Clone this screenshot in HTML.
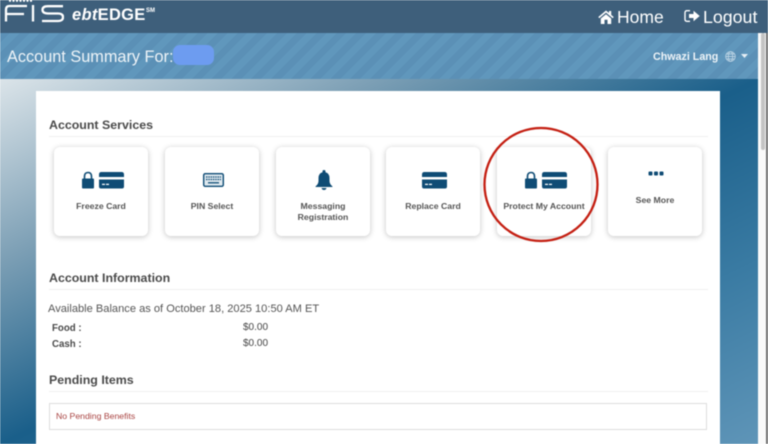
<!DOCTYPE html>
<html><head><meta charset="utf-8"><style>
html,body{margin:0;padding:0}
body{width:768px;height:444px;overflow:hidden;position:relative;font-family:"Liberation Sans",sans-serif;background:#fff}
#w{left:0;top:0;width:768px;height:444px;overflow:hidden;filter:blur(.4px)}
div,span,svg{position:absolute}
span{white-space:nowrap}
.h{left:49px;font-size:12.4px;font-weight:bold;color:#4a4a4a;line-height:16px}
.hr{left:49px;width:659px;height:1px;background:#f0f0f0}
.c{top:147px;width:94px;height:89px;background:#fff;border-radius:6px;box-shadow:0 1px 6px rgba(0,0,0,.24)}
.t{width:100%;text-align:center;left:0;font-size:8.7px;font-weight:bold;color:#555;line-height:10.5px}
.b{font-size:9.7px;font-weight:bold;color:#4a4a4a;line-height:12px}
.v{font-size:10px;color:#444;line-height:12px;left:243px}
</style></head><body><div id="w">
<div style="left:0;top:79px;width:758px;height:365px;background:linear-gradient(to bottom right,#dbe4e9 0%,#7c9fb5 25%,#1a5f8a 50%,#3a7ba3 75%,#5f95b8 100%)"></div>
<div style="left:0;top:0;width:768px;height:33px;background:#3e5f7b"></div>
<div style="left:0;top:33px;width:758px;height:46px;background:repeating-linear-gradient(135deg,#5b90b6 0,#5b90b6 7px,#6097bc 7px,#6097bc 14px)"></div>
<div style="left:758px;top:33px;width:8px;height:411px;background:#fafafa"></div>
<div style="left:761px;top:33px;width:4px;height:117px;background:#c4c4c4;border-radius:2px"></div>
<div style="left:766px;top:33px;width:2px;height:411px;background:#6e6e6e"></div>

<svg style="left:4px;top:0" width="60" height="24" viewBox="0 0 60 24"><g fill="none" stroke="#fff" stroke-width="2.300"><path d="M2 21.500V9.500Q2 6 5.500 6H23"/><path d="M2 14H20"/><path d="M29 5V21.500"/><path d="M59 6.200H44Q38.500 6.200 38.500 9.800T44 13.500H54Q59 13.500 59 17.200T54 21H38"/></g><path stroke="#fff" stroke-width="2" stroke-dasharray="2 1.500" d="M5 .8H29"/></svg>
<span style="left:72px;top:5px;font-size:16.500px;line-height:21px;font-weight:bold;color:#fff;letter-spacing:.3px"><i>ebt</i>EDGE</span>
<span style="left:146px;top:8px;font-size:6px;line-height:7px;font-weight:bold;color:#fff">SM</span>

<svg style="left:598px;top:10px" width="16" height="14" viewBox="0 0 16 14"><path fill="#fff" d="M8 0.500L0.300 7 1.300 8.200 8 2.600 14.700 8.200 15.700 7 13.200 4.900V1H11V3L8 .5ZM2.800 8.500V14H6.500V9.800H9.500V14H13.200V8.500L8 4.200Z"/></svg>
<span style="left:617px;top:7px;font-size:17.500px;line-height:21px;color:#fff">Home</span>
<svg style="left:684px;top:9px" width="17" height="15" viewBox="0 0 17 15"><path fill="none" stroke="#fff" stroke-width="1.400" d="M6 1.700H3Q1 1.700 1 3.700V10.300Q1 12.300 3 12.300H6"/><path fill="#fff" d="M5 5H9.500V1.800L15.700 7 9.500 12.200V9H5Z"/></svg>
<span style="left:703px;top:7px;font-size:17.800px;line-height:21px;color:#fff">Logout</span>

<span style="left:7px;top:47px;font-size:16.300px;line-height:20px;color:#eef4f8">Account Summary For:</span>
<div style="left:173px;top:45px;width:41px;height:20px;background:#6d9cf0;border-radius:7px"></div>
<span style="left:653px;top:51px;font-size:10.700px;line-height:13px;font-weight:bold;color:#eef4f8">Chwazi Lang</span>
<svg style="left:725px;top:51px" width="11" height="11" viewBox="0 0 11 11"><g fill="none" stroke="#b9d2e3" stroke-width=".9"><circle cx="5.500" cy="5.500" r="4.800"/><ellipse cx="5.500" cy="5.500" rx="2.200" ry="4.800"/><path d="M.7 5.500H10.300M1.400 3H9.600M1.400 8H9.600"/></g></svg>
<svg style="left:741px;top:54px" width="7" height="4" viewBox="0 0 7 4"><path fill="#e6eff5" d="M0 0H7L3.500 4Z"/></svg>

<div style="left:36px;top:91px;width:684px;height:353px;background:#fff"></div>

<span class="h" style="top:117px">Account Services</span>
<div class="hr" style="top:136px"></div>

<div class="c" style="left:54px"><svg style="left:27px;top:24px" width="43" height="18" viewBox="0 0 43 18"><use href="#lk"/></svg><div class="t" style="top:54px">Freeze Card</div></div>
<div class="c" style="left:165px"><svg style="left:38px;top:26px" width="21" height="14" viewBox="0 0 21 14"><rect x=".7" y=".7" width="19.600" height="12.600" rx="1.500" fill="#dfe9ef" stroke="#0f4c75" stroke-width="1.400"/><path stroke="#0f4c75" stroke-width="1.300" stroke-dasharray="1.500 .8" d="M3 4H18M3 6.500H18"/><path stroke="#0f4c75" stroke-width="1.300" d="M5 9.800H16"/></svg><div class="t" style="top:54px">PIN Select</div></div>
<div class="c" style="left:276px"><svg style="left:39px;top:23px" width="18" height="20" viewBox="0 0 18 20"><path fill="#0f4c75" d="M9 0Q10.500 0 10.500 1.500V2.200Q14.500 3.200 14.500 8V11Q14.500 14 17.500 16.500V17H.5V16.500Q3.500 14 3.500 11V8Q3.500 3.200 7.500 2.200V1.500Q7.500 0 9 0ZM6.500 18H11.500Q11 20 9 20T6.500 18Z"/></svg><div class="t" style="top:54px">Messaging<br>Registration</div></div>
<div class="c" style="left:386px"><svg style="left:36px;top:24px" width="25" height="18" viewBox="18 0 25 18"><use href="#cd"/></svg><div class="t" style="top:54px">Replace Card</div></div>
<div class="c" style="left:497px"><svg style="left:27px;top:24px" width="43" height="18" viewBox="0 0 43 18"><use href="#lk"/></svg><div class="t" style="top:54px">Protect My Account</div></div>
<div class="c" style="left:608px"><svg style="left:40px;top:24px" width="16" height="6" viewBox="0 0 16 6"><g fill="#0f4c75"><rect x=".5" y=".5" width="4" height="4" rx="1"/><rect x="6" y=".5" width="4" height="4" rx="1"/><rect x="11.500" y=".5" width="4" height="4" rx="1"/></g></svg><div class="t" style="top:48px">See More</div></div>

<svg width="0" height="0" style="left:0;top:0"><defs>
<g id="cd"><path fill="#0f4c75" d="M18 3.500Q18 1 20.500 1H40.500Q43 1 43 3.500V6H18ZM18 8.500H43V15.500Q43 17.500 41 17.500H20Q18 17.500 18 15.500Z"/><path fill="#fff" d="M21 12.800H24V14H21ZM25 12.800H28V14H25Z"/></g>
<g id="lk"><path fill="none" stroke="#0f4c75" stroke-width="1.600" d="M3.500 8V5.500Q3.500 1.500 7 1.500T10.500 5.500V8"/><path fill="#0f4c75" d="M1 8.500Q1 7.500 2 7.500H12Q13 7.500 13 8.500V16.500Q13 17.500 12 17.500H2Q1 17.500 1 16.500Z"/><use href="#cd"/></g>
</defs></svg>

<span class="h" style="top:270px">Account Information</span>
<div class="hr" style="top:289px"></div>
<span style="left:48px;top:302px;font-size:11.100px;line-height:14px;color:#555">Available Balance as of October 18, 2025 10:50 AM ET</span>
<span class="b" style="left:52px;top:323px">Food :</span>
<span class="v" style="top:322px">$0.00</span>
<span class="b" style="left:52px;top:339px">Cash :</span>
<span class="v" style="top:338px">$0.00</span>

<span class="h" style="top:372px">Pending Items</span>
<div class="hr" style="top:391px"></div>
<div style="left:49px;top:403px;width:656px;height:25px;border:1px solid #ddd"></div>
<span style="left:56px;top:411px;font-size:8.700px;line-height:11px;color:#a94442">No Pending Benefits</span>

<svg style="left:480px;top:124px" width="122" height="122" viewBox="0 0 122 122"><circle cx="61" cy="60.500" r="56.500" fill="none" stroke="#c41f12" stroke-width="2.300"/></svg>
</div></body></html>
